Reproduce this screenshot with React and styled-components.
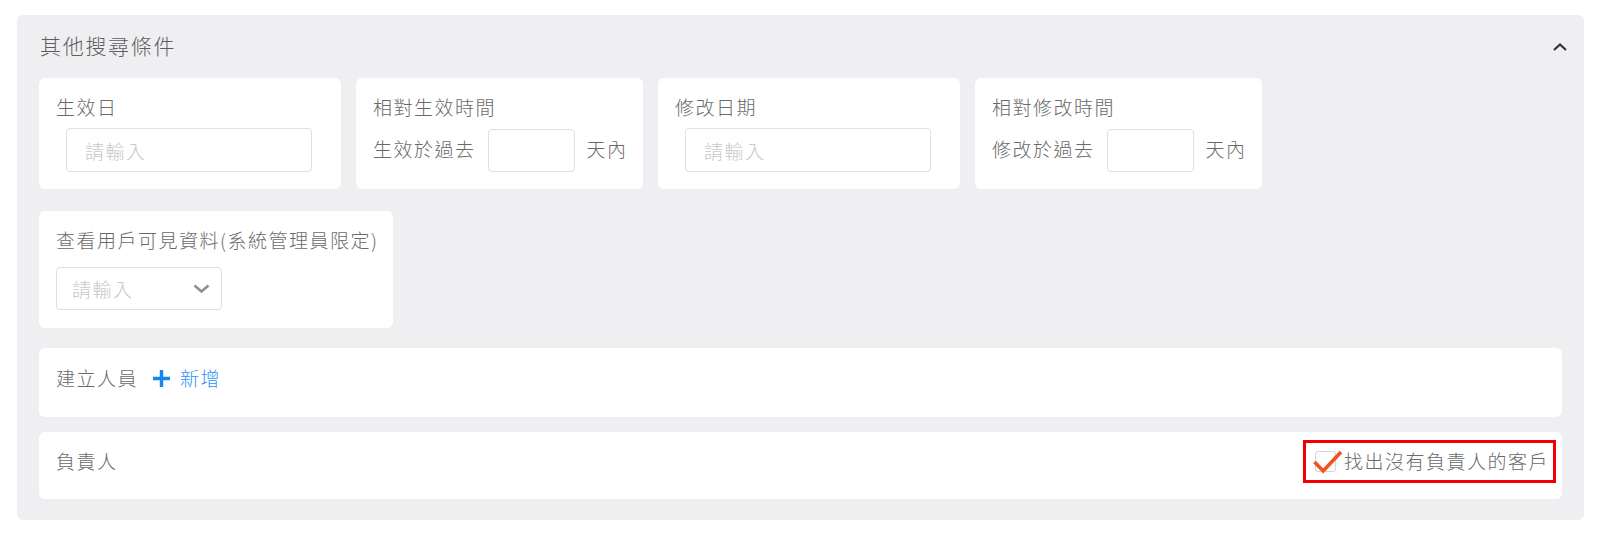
import React from 'react'
import styled, { createGlobalStyle } from 'styled-components'

const GlobalStyle = createGlobalStyle`
  body {
    margin: 0;
    background: #fff;
    font-family: "Noto Sans CJK TC", "Noto Sans", sans-serif;
  }
  * { box-sizing: border-box; }
`;

const Page = styled.div`
  padding: 15px 15px 13px 17px;
`;

const Panel = styled.section`
  background: #efeff1;
  border-radius: 6px;
  padding: 0 22px 21px;
`;

const PanelHeader = styled.div`
  height: 63px;
  display: flex;
  align-items: center;
  justify-content: space-between;
  margin-right: -5px;
`;

const Title = styled.h3`
  margin: 0 0 3px 1px;
  font-size: 21px;
  font-weight: 300;
  line-height: 26px;
  letter-spacing: 1.7px;
  color: #5e5e5e;
`;

const CollapseButton = styled.button`
  border: 0;
  background: none;
  padding: 0;
  width: 14px;
  height: 14px;
  display: flex;
  align-items: center;
  justify-content: center;
  cursor: pointer;
`;

const Body = styled.div`
  display: flex;
  flex-direction: column;
  gap: 15px;
`;

const Filters = styled.div`
  display: flex;
  flex-wrap: wrap;
  gap: 22px 15px;
  margin-bottom: 5px;
`;

const Card = styled.div`
  width: ${p => p.$width}px;
  height: ${p => p.$height}px;
  background: #fff;
  border-radius: 6px;
  padding: 17px 17px 0;
`;

const Label = styled.div`
  font-size: 19px;
  font-weight: 300;
  line-height: 24px;
  letter-spacing: 1.5px;
  color: #6a6a6a;
  white-space: nowrap;
`;

const RowText = styled(Label)`
  margin-bottom: 4px;
`;

const TextInput = styled.input`
  display: block;
  width: ${p => p.$width}px;
  height: ${p => p.$height}px;
  margin: 9px 0 0 10px;
  padding: 0 0 0 18px;
  border: 1px solid #dcdfe6;
  border-radius: 4px;
  font-family: inherit;
  font-size: 19px;
  font-weight: 300;
  letter-spacing: 1.5px;
  color: #666;
  outline: none;
  &::placeholder { color: #c6c8cc; }
`;

const InlineRow = styled.div`
  display: flex;
  align-items: center;
  gap: 12px;
  margin-top: 10px;
`;

const DaysInput = styled(TextInput)`
  margin: 0;
  padding: 0 8px;
`;

const Select = styled.div`
  width: 166px;
  height: 43px;
  margin-top: 15px;
  border: 1px solid #dcdfe6;
  border-radius: 4px;
  display: flex;
  align-items: center;
  justify-content: space-between;
  padding: 0 11px 0 15px;
  cursor: pointer;
`;

const Placeholder = styled.span`
  font-size: 19px;
  font-weight: 300;
  letter-spacing: 1.5px;
  color: #c6c8cc;
`;

const WideCard = styled.div`
  height: ${p => p.$height}px;
  background: #fff;
  border-radius: 6px;
  display: flex;
  align-items: center;
  justify-content: space-between;
  padding: 0 6px 9px 17px;
`;

const Group = styled.div`
  display: flex;
  align-items: center;
`;

const AddButton = styled.button`
  display: flex;
  align-items: center;
  gap: 10px;
  margin-left: 15px;
  padding: 0;
  border: 0;
  background: none;
  font-family: inherit;
  font-size: 19px;
  font-weight: 300;
  line-height: 24px;
  letter-spacing: 1.5px;
  color: #2f8ff5;
  cursor: pointer;
`;

const CheckLabel = styled.label`
  height: 43px;
  display: flex;
  align-items: center;
  gap: 8px;
  padding: 0 4px 0 9px;
  border: 3px solid #f20000;
  cursor: pointer;
`;

const CheckBox = styled.span`
  position: relative;
  width: 21px;
  height: 21px;
  border: 1px solid #d4d4d4;
  border-radius: 3px;
  background: #fff;
`;

const CheckMark = styled.svg`
  position: absolute;
  left: -3px;
  top: -1px;
  overflow: visible;
`;

const ChevronUp = () => (
  <svg width="14" height="8" viewBox="0 0 14 8">
    <polyline points="1,7 7,1.5 13,7" fill="none" stroke="#333" strokeWidth="2.2" />
  </svg>
)

const ChevronDown = () => (
  <svg width="17" height="9" viewBox="0 0 17 9">
    <polyline points="1.5,1.5 8.5,7.5 15.5,1.5" fill="none" stroke="#8f8f8f" strokeWidth="2.6" />
  </svg>
)

const PlusIcon = () => (
  <svg width="17" height="17" viewBox="0 0 17 17">
    <path d="M0 8.5H17M8.5 0V17" stroke="#1a84f0" strokeWidth="3.4" />
  </svg>
)

const DateCard = ({ label }) => (
  <Card $width={302} $height={111}>
    <Label>{label}</Label>
    <TextInput $width={246} $height={44} placeholder="請輸入" />
  </Card>
)

const RelativeCard = ({ label, prefix }) => (
  <Card $width={287} $height={111}>
    <Label>{label}</Label>
    <InlineRow>
      <RowText>{prefix}</RowText>
      <DaysInput $width={87} $height={43} />
      <RowText>天內</RowText>
    </InlineRow>
  </Card>
)

export default function App() {
  return (
    <Page>
      <GlobalStyle />
      <Panel>
        <PanelHeader>
          <Title>其他搜尋條件</Title>
          <CollapseButton><ChevronUp /></CollapseButton>
        </PanelHeader>
        <Body>
          <Filters>
            <DateCard label="生效日" />
            <RelativeCard label="相對生效時間" prefix="生效於過去" />
            <DateCard label="修改日期" />
            <RelativeCard label="相對修改時間" prefix="修改於過去" />
            <Card $width={354} $height={117}>
              <Label>查看用戶可見資料(系統管理員限定)</Label>
              <Select>
                <Placeholder>請輸入</Placeholder>
                <ChevronDown />
              </Select>
            </Card>
          </Filters>
          <WideCard $height={69}>
            <Group>
              <Label>建立人員</Label>
              <AddButton><PlusIcon />新增</AddButton>
            </Group>
          </WideCard>
          <WideCard $height={67}>
            <Label>負責人</Label>
            <CheckLabel>
              <CheckBox>
                <CheckMark width="30" height="22" viewBox="0 0 30 22">
                  <polyline points="1.5,11 10.2,20 28,1" fill="none" stroke="#f4511e" strokeWidth="3.6" />
                </CheckMark>
              </CheckBox>
              <Label>找出沒有負責人的客戶</Label>
            </CheckLabel>
          </WideCard>
        </Body>
      </Panel>
    </Page>
  )
}
